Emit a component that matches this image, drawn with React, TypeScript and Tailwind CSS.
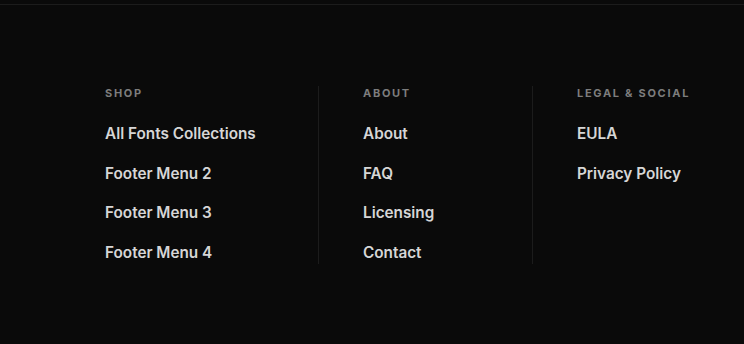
const columns = [
  {
    title: 'Shop',
    links: ['All Fonts Collections', 'Footer Menu 2', 'Footer Menu 3', 'Footer Menu 4'],
  },
  {
    title: 'About',
    links: ['About', 'FAQ', 'Licensing', 'Contact'],
  },
  {
    title: 'Legal & Social',
    links: ['EULA', 'Privacy Policy'],
  },
];

export default function App() {
  return (
    <div
      className="min-h-[344px] w-full bg-[#0a0a0a] pt-[4px]"
      style={{ fontFamily: 'Inter, "Liberation Sans", sans-serif' }}
    >
      <div className="h-px w-full bg-[#1c1c1c]" />
      <footer className="flex pl-[105px] pt-[81px]">
        {columns.map((col, i) => (
          <div
            key={col.title}
            className={
              i === 0
                ? 'w-[214px] border-r border-[#1c1c1c] pb-[1px]'
                : i === 1
                ? 'w-[214px] border-r border-[#1c1c1c] pb-[1px] pl-[44px]'
                : 'pl-[44px]'
            }
          >
            <h3 className="text-[11px] font-bold uppercase leading-[14px] tracking-[0.155em] text-[#7d7d7d]">
              {col.title}
            </h3>
            <ul className="mt-[24px] flex flex-col gap-[19.7px]">
              {col.links.map((link) => (
                <li key={link} className="text-[15.3px] leading-[20px]">
                  <a href="#" className="font-semibold text-[#d6d6d6]">
                    {link}
                  </a>
                </li>
              ))}
            </ul>
          </div>
        ))}
      </footer>
    </div>
  );
}
